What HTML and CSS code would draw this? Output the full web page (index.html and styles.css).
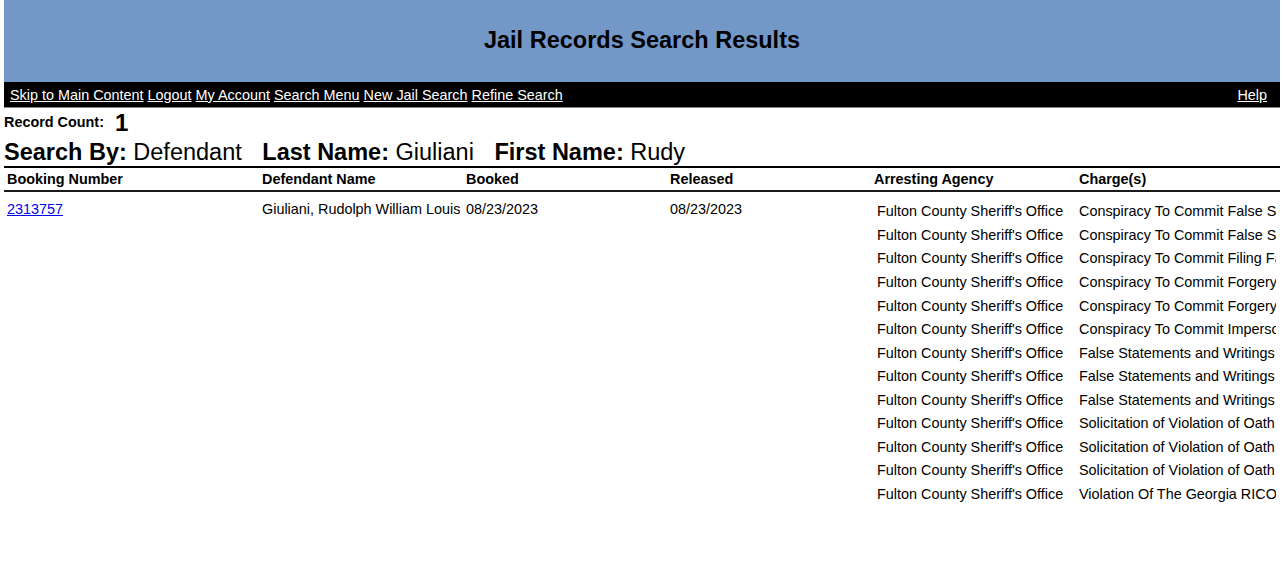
FILE: index.html
```html
<!DOCTYPE html>
<html lang="en">
<head>
<meta charset="utf-8">
<title>Jail Records Search Results</title>
<link rel="stylesheet" href="styles.css">
</head>
<body>
<header class="banner">
  <h1 class="title">Jail Records Search Results</h1>
</header>
<nav class="navbar">
  <div class="nav-left">
    <a href="#main">Skip to Main Content</a> <a href="#">Logout</a> <a href="#">My Account</a> <a href="#">Search Menu</a> <a href="#">New Jail Search</a> <a href="#">Refine Search</a>
  </div>
  <div class="nav-right"><a href="#">Help</a></div>
</nav>
<main id="main">
  <div class="count"><span class="count-label">Record Count:</span><span class="count-value">1</span></div>
  <div class="criteria">
    <span class="crit"><b>Search By:</b> Defendant</span>
    <span class="crit"><b>Last Name:</b> Giuliani</span>
    <span class="crit"><b>First Name:</b> Rudy</span>
  </div>
  <table class="results">
    <colgroup>
      <col class="c1"><col class="c2"><col class="c3"><col class="c4"><col class="c5"><col class="c6">
    </colgroup>
    <thead>
      <tr>
        <th>Booking Number</th>
        <th>Defendant Name</th>
        <th>Booked</th>
        <th>Released</th>
        <th>Arresting Agency</th>
        <th>Charge(s)</th>
      </tr>
    </thead>
    <tbody>
      <tr>
        <td><a href="#">2313757</a></td>
        <td>Giuliani, Rudolph William Louis</td>
        <td>08/23/2023</td>
        <td>08/23/2023</td>
        <td colspan="2" class="nested-cell">
          <div class="charges">
            <div class="agency">Fulton County Sheriff's Office</div><div class="charge">Conspiracy To Commit False Statements and Writings</div>
            <div class="agency">Fulton County Sheriff's Office</div><div class="charge">Conspiracy To Commit False Statements and Writings</div>
            <div class="agency">Fulton County Sheriff's Office</div><div class="charge">Conspiracy To Commit Filing False Documents</div>
            <div class="agency">Fulton County Sheriff's Office</div><div class="charge">Conspiracy To Commit Forgery in the First Degree</div>
            <div class="agency">Fulton County Sheriff's Office</div><div class="charge">Conspiracy To Commit Forgery in the First Degree</div>
            <div class="agency">Fulton County Sheriff's Office</div><div class="charge">Conspiracy To Commit Impersonating a Public Officer</div>
            <div class="agency">Fulton County Sheriff's Office</div><div class="charge">False Statements and Writings</div>
            <div class="agency">Fulton County Sheriff's Office</div><div class="charge">False Statements and Writings</div>
            <div class="agency">Fulton County Sheriff's Office</div><div class="charge">False Statements and Writings</div>
            <div class="agency">Fulton County Sheriff's Office</div><div class="charge">Solicitation of Violation of Oath by Public Officer</div>
            <div class="agency">Fulton County Sheriff's Office</div><div class="charge">Solicitation of Violation of Oath by Public Officer</div>
            <div class="agency">Fulton County Sheriff's Office</div><div class="charge">Solicitation of Violation of Oath by Public Officer</div>
            <div class="agency">Fulton County Sheriff's Office</div><div class="charge">Violation Of The Georgia RICO Act</div>
          </div>
        </td>
      </tr>
    </tbody>
  </table>
</main>
</body>
</html>
```
FILE: styles.css
```css
html, body {
  margin: 0;
  padding: 0;
  background: #fff;
}
body {
  margin: 0 4px;
  font-family: "Liberation Sans", Arial, sans-serif;
  font-size: 14.4px;
  color: #000;
}
.banner {
  height: 82px;
  background: #7398c8;
  display: flex;
  align-items: center;
  justify-content: center;
}
.title {
  margin: 0;
  font-size: 23.5px;
  font-weight: bold;
  line-height: 28px;
  padding-bottom: 2px;
}
.navbar {
  background: #000;
  border-bottom: 1px solid #8a8a8a;
  display: flex;
  align-items: center;
  justify-content: space-between;
  padding: 1px 13px 0 6px;
  box-sizing: content-box;
  height: 24px;
  line-height: 17px;
}
.navbar a {
  color: #fff;
  text-decoration: underline;
}
.count {
  height: 28px;
  display: flex;
  align-items: center;
}
.count-label {
  font-weight: bold;
  font-size: 14.4px;
  margin-right: 11px;
}
.count-value {
  font-weight: bold;
  font-size: 24px;
  line-height: 28px;
  padding-top: 2px;
}
.criteria {
  font-size: 23.5px;
  line-height: 28px;
  margin-top: 2px;
  height: 28px;
}
.crit {
  margin-right: 14px;
}
.results {
  width: 100%;
  table-layout: fixed;
  border-collapse: collapse;
  border-top: 2px solid #000;
}
.c1 { width: 255px; }
.c2 { width: 204px; }
.c3 { width: 204px; }
.c4 { width: 204px; }
.c5 { width: 205px; }
.results th {
  text-align: left;
  font-weight: bold;
  padding: 0 3px;
  height: 22px;
  line-height: 17px;
  border-bottom: 2px solid #1a1a1a;
  white-space: nowrap;
}
.results td {
  vertical-align: top;
  padding: 9px 3px 0;
  line-height: 17px;
  white-space: nowrap;
}
.results td a {
  color: #0000ee;
}
.results td.nested-cell {
  padding: 11.4px 0 0;
}
.charges {
  display: grid;
  grid-template-columns: 208px 197px;
  grid-auto-rows: 23.55px;
}
.agency {
  padding-left: 6px;
  white-space: nowrap;
  overflow: hidden;
}
.charge {
  white-space: nowrap;
  overflow: hidden;
}
```
